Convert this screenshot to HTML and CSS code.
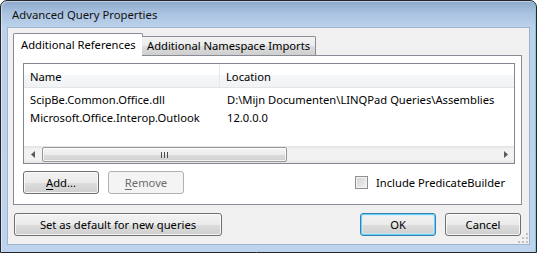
FILE: index.html
```html
<!DOCTYPE html>
<html>
<head>
<meta charset="utf-8">
<link rel="stylesheet" href="styles.css">
</head>
<body>
<div class="window">
  <div class="titlebar"><span class="title">Advanced Query Properties</span></div>
  <div class="client">
    <div class="tabs">
      <div class="tab selected">Additional References</div>
      <div class="tab">Additional Namespace Imports</div>
    </div>
    <div class="page">
      <div class="listview">
        <div class="lv-header">
          <div class="hcol c1">Name</div>
          <div class="hcol c2">Location</div>
        </div>
        <div class="lv-body">
          <div class="row"><div class="c1">ScipBe.Common.Office.dll</div><div class="c2">D:\Mijn Documenten\LINQPad Queries\Assemblies</div></div>
          <div class="row"><div class="c1">Microsoft.Office.Interop.Outlook</div><div class="c2">12.0.0.0</div></div>
        </div>
        <div class="hscroll">
          <div class="sb-arrow">
            <svg width="4" height="7" viewBox="0 0 4 7"><path d="M4 0 L0 3.5 L4 7 Z" fill="#5a5a5a"/></svg>
          </div>
          <div class="track">
            <div class="thumb">
              <svg width="7" height="6" viewBox="0 0 7 6"><rect x="0" y="0" width="1" height="6" fill="#4d4d4d"/><rect x="3" y="0" width="1" height="6" fill="#4d4d4d"/><rect x="6" y="0" width="1" height="6" fill="#4d4d4d"/></svg>
            </div>
          </div>
          <div class="sb-arrow">
            <svg width="4" height="7" viewBox="0 0 4 7"><path d="M0 0 L4 3.5 L0 7 Z" fill="#5a5a5a"/></svg>
          </div>
        </div>
      </div>
      <div class="actions">
        <button class="btn"><u>A</u>dd...</button>
        <button class="btn" disabled><u>R</u>emove</button>
        <label class="check"><span class="box"></span><span>Include PredicateBuilder</span></label>
      </div>
    </div>
    <div class="footer">
      <button class="btn wide">Set as default for new queries</button>
      <div class="footer-right">
        <button class="btn default">OK</button>
        <button class="btn">Cancel</button>
      </div>
    </div>
    <svg class="grip" width="10" height="10" viewBox="0 0 10 10">
      <rect x="8" y="0" width="2" height="2" fill="#c1c1c1"/>
      <rect x="4" y="4" width="2" height="2" fill="#c1c1c1"/>
      <rect x="8" y="4" width="2" height="2" fill="#c1c1c1"/>
      <rect x="0" y="8" width="2" height="2" fill="#c1c1c1"/>
      <rect x="4" y="8" width="2" height="2" fill="#c1c1c1"/>
      <rect x="8" y="8" width="2" height="2" fill="#c1c1c1"/>
    </svg>
  </div>
</div>
</body>
</html>
```

FILE: styles.css
```css
* { box-sizing: border-box; }
html, body {
  margin: 0;
  padding: 0;
  background: #ffffff;
}
body {
  width: 537px;
  height: 254px;
  overflow: hidden;
  font-family: "Noto Sans", "Open Sans", sans-serif;
  font-size: 11.2px;
  color: #000;
}
.window {
  width: 537px;
  height: 253px;
  border: 1px solid #23272c;
  border-radius: 7px 7px 0 0;
  background: linear-gradient(#8da8cb 0px, #a9c2e0 12px, #bcd2ec 26px, #bed4ee 100%);
  box-shadow: inset 1px 1px 0 rgba(255,255,255,0.45), inset -1px 0 0 #7fc8d8;
  display: flex;
  flex-direction: column;
}
.titlebar {
  height: 26px;
  padding-left: 11px;
  padding-top: 6px;
  flex: none;
}
.title {
  font-size: 11.3px;
  color: #111;
}
.client {
  position: relative;
  margin: 0 6px;
  height: 218px;
  border: 1px solid #9fb3ca;
  background: #f0f0f0;
  display: flex;
  flex-direction: column;
}
.tabs {
  display: flex;
  align-items: flex-start;
  margin: 5px 0 0 5px;
  height: 22px;
  position: relative;
  z-index: 2;
}
.tab {
  border: 1px solid #898c95;
  border-bottom: none;
  white-space: nowrap;
}
.tab.selected {
  width: 130px;
  height: 23px;
  background: #ffffff;
  padding: 3px 0 0 7px;
  border-radius: 2px 2px 0 0;
}
.tab:not(.selected) {
  width: 174px;
  height: 19px;
  margin-top: 3px;
  margin-left: -1px;
  padding: 1px 0 0 5px;
  background: linear-gradient(#f3f3f3, #ebebeb 50%, #dddddd 50%, #cfcfcf);
  border-left: none;
  border-radius: 0 2px 0 0;
}
.page {
  margin-left: 5px;
  width: 509px;
  height: 150px;
  border: 1px solid #898c95;
  background: #ffffff;
  padding: 7px 0 0 9px;
  position: relative;
  z-index: 1;
}
.listview {
  width: 492px;
  height: 101px;
  border: 1px solid #828790;
  background: #fff;
  display: flex;
  flex-direction: column;
}
.lv-header {
  height: 24px;
  flex: none;
  display: flex;
  border-bottom: 1px solid #e5e5e5;
  background: linear-gradient(#ffffff 0%, #ffffff 50%, #f6f7f8 50%, #f1f2f4 100%);
}
.hcol {
  padding: 5px 0 0 6px;
}
.hcol.c1 {
  width: 196px;
  border-right: 1px solid #e3e8ee;
}
.lv-body {
  flex: 1;
  padding-top: 2px;
}
.row {
  height: 18px;
  display: flex;
  align-items: center;
}
.row .c1 {
  width: 196px;
  padding-left: 6px;
}
.row .c2 {
  padding-left: 7px;
  white-space: nowrap;
}
.hscroll {
  height: 17px;
  flex: none;
  display: flex;
  background: linear-gradient(#e3e3e3, #f2f2f2 20%, #f2f2f2 80%, #e6e6e6);
}
.sb-arrow {
  width: 17px;
  display: flex;
  align-items: center;
  justify-content: center;
}
.track {
  flex: 1;
  display: flex;
  align-items: center;
}
.thumb {
  width: 245px;
  height: 15px;
  margin-left: 1px;
  border: 1px solid #979797;
  border-radius: 2px;
  background: linear-gradient(#f5f5f5, #ececec 50%, #dcdcdc 50%, #d2d2d2);
  box-shadow: inset 0 0 0 1px rgba(255,255,255,0.7);
  display: flex;
  align-items: center;
  justify-content: center;
}
.actions {
  margin-top: 7px;
  display: flex;
  align-items: center;
  gap: 9px;
  padding-right: 16px;
}
.btn {
  font-family: inherit;
  font-size: inherit;
  color: #000;
  width: 76px;
  height: 23px;
  padding: 0 0 1px 0;
  border: 1px solid #707070;
  border-radius: 3px;
  background: linear-gradient(#f2f2f2 0%, #ebebeb 50%, #dddddd 50%, #cfcfcf 100%);
  box-shadow: inset 0 0 0 1px rgba(252,252,252,0.85);
}
.btn u { text-decoration: underline; text-underline-offset: 2px; }
.btn:disabled {
  border-color: #adb2b5;
  background: #f4f4f4;
  color: #6d6d6d;
  box-shadow: none;
}
.check {
  margin-left: auto;
  display: flex;
  align-items: center;
  gap: 8px;
}
.box {
  width: 13px;
  height: 13px;
  border: 1px solid #8e8f8f;
  background: linear-gradient(135deg, #cfd1d4, #f4f4f4);
  box-shadow: inset 0 0 0 1px #f4f4f4;
}
.footer {
  margin: 8px 8px 0 6px;
  display: flex;
  justify-content: space-between;
}
.btn.wide { width: 208px; }
.footer-right {
  display: flex;
  gap: 9px;
}
.btn.default {
  border-color: #3c7fb1;
  box-shadow: inset 0 0 0 1px #62d2f7, inset 0 0 0 2px rgba(200,240,255,0.5);
}
.grip {
  position: absolute;
  right: 1px;
  bottom: 1px;
}
```
